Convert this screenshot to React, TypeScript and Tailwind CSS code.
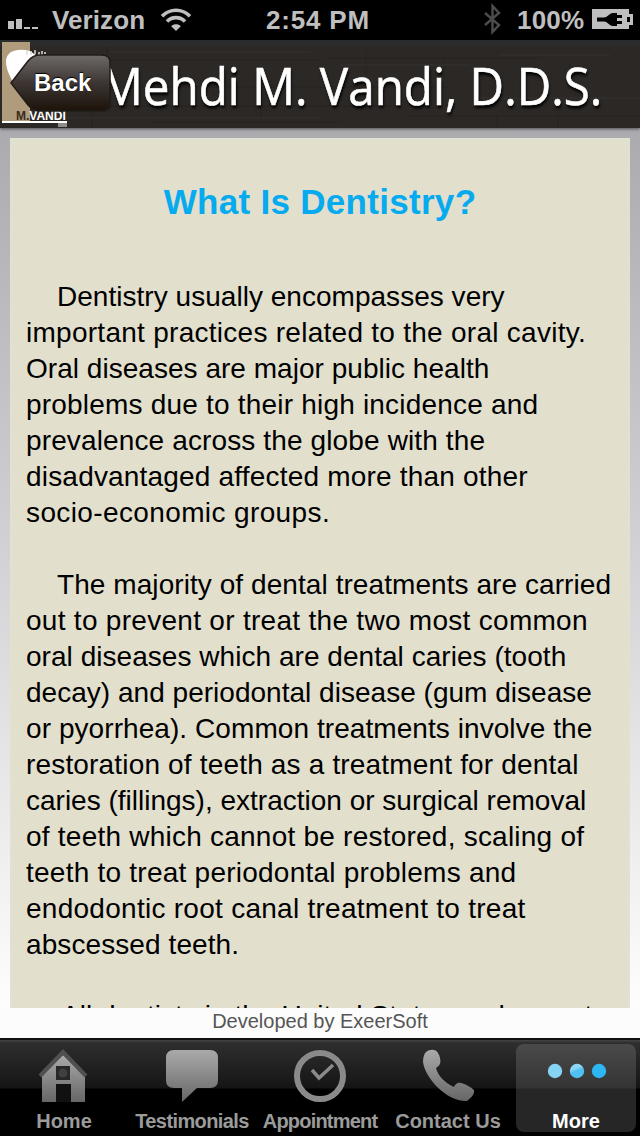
import type { ReactNode } from "react";
import clsx from "clsx";

interface TextLine {
  text: string;
  className?: string;
}

const paragraphs: TextLine[][] = [
  [
    { text: "Dentistry usually encompasses very", className: "pl-[31px] tracking-[0.03px]" },
    { text: "important practices related to the oral cavity.", className: "tracking-[0.27px]" },
    { text: "Oral diseases are major public health", className: "tracking-[0.03px]" },
    { text: "problems due to their high incidence and", className: "tracking-[0.2px]" },
    { text: "prevalence across the globe with the", className: "tracking-[0.13px]" },
    { text: "disadvantaged affected more than other", className: "tracking-[0.19px]" },
    { text: "socio-economic groups.", className: "tracking-[0.38px]" },
  ],
  [
    { text: "The majority of dental treatments are carried", className: "pl-[31px] tracking-[0.07px]" },
    { text: "out to prevent or treat the two most common", className: "tracking-[0.29px]" },
    { text: "oral diseases which are dental caries (tooth", className: "tracking-[0.04px]" },
    { text: "decay) and periodontal disease (gum disease", className: "tracking-[0.02px]" },
    { text: "or pyorrhea). Common treatments involve the", className: "tracking-[0.07px]" },
    { text: "restoration of teeth as a treatment for dental", className: "tracking-[0.17px]" },
    { text: "caries (fillings), extraction or surgical removal" },
    { text: "of teeth which cannot be restored, scaling of", className: "tracking-[0.23px]" },
    { text: "teeth to treat periodontal problems and", className: "tracking-[0.24px]" },
    { text: "endodontic root canal treatment to treat", className: "tracking-[0.27px]" },
    { text: "abscessed teeth.", className: "tracking-[0.09px]" },
  ],
  [{ text: "All dentists in the United States undergo at", className: "-mt-px pl-[35px] tracking-[0.05px]" }],
];

function StatusBar() {
  return (
    <div className="flex h-10 shrink-0 items-center bg-black text-[26px] font-bold text-[#bfbfbf]">
      <svg width="40" height="40" viewBox="0 0 40 40" fill="#bfbfbf">
        <path d="M8 21h6v8H8zM16 19h6v10h-6zM24 27h6v2h-6zM32 27h6v2h-6z" />
      </svg>
      <span className="ml-3 w-[94px] whitespace-nowrap tracking-[0.1px]">Verizon</span>
      <svg className="ml-[14px]" width="32" height="40" viewBox="0 0 32 40" fill="none" stroke="#bfbfbf" strokeWidth="3.6">
        <path d="M2 16.2c8-8 20-8 28 0M7 21.4c5-5 13-5 18 0" />
        <path d="M16 31l-4.8-4.8c2.8-2.6 6.8-2.6 9.6 0z" fill="#bfbfbf" stroke="none" />
      </svg>
      <span className="ml-[74px] w-[106px] whitespace-nowrap tracking-[0.8px]">2:54 PM</span>
      <svg className="ml-[111px]" width="20" height="40" viewBox="0 0 20 40" fill="none" stroke="#4d4d4d" strokeWidth="2.4">
        <path d="M2 13l14 12-6.500 7V6l6.500 7-14 12" />
      </svg>
      <span className="ml-[14px] w-[69px] whitespace-nowrap tracking-[0.2px]">100%</span>
      <svg className="ml-[5px]" width="44" height="40" viewBox="0 0 44 40">
        <path d="M1 9h37v5h4v11h-4v4H1z" fill="#bfbfbf" />
        <path d="M6 17.500h7c4 0 5-4.500 9-4.500h4v2h5v3h-5v3h5v3h-5v2h-4c-4 0-5-4.500-9-4.500H6z" fill="#000" />
        <path d="M36 17h3v5h-3z" fill="#000" />
      </svg>
    </div>
  );
}

function Header() {
  return (
    <div className="relative z-10 h-[88px] shrink-0 overflow-hidden bg-[#2c2825] shadow-[0_1px_3px_#0008]">
      <svg className="absolute inset-0" width="640" height="88" viewBox="0 0 640 88" fill="none">
        <path d="M0 3h640" stroke="#2b2c2c" strokeWidth="6" />
        <path d="M70 20h250M330 18h210M120 47h330M0 66h400M410 76h230M150 82h190" stroke="#272320" />
        <path d="M107 7v13M261 66v17M366 12v36M497 75v13M558 75v13M570 22v24M444 18v12M92 66v22" stroke="#262220" />
        <path d="M110 12h200M340 25h130M480 58h160M20 78h300M500 15h110" stroke="#302c29" strokeWidth="2" />
      </svg>
      <h1 className="absolute left-[100px] top-[9px] origin-left scale-x-[0.915] whitespace-nowrap font-['Open_Sans'] text-[52px] leading-[72px] text-white [-webkit-text-stroke:0.6px_white] [text-shadow:1px_3px_3px_#000]">
        Mehdi M. Vandi, D.D.S.
      </h1>
      <div className="absolute left-[2px] top-[2px] h-[81px] w-7 bg-[#b09c7c]" />
      <svg className="absolute left-0 top-0" width="70" height="88" viewBox="0 0 70 88">
        <path d="M30 11c-12-3-23-1-24 10 0 10 5 16 8 24h26V18z" fill="#fff" />
        <path d="M27 15v-4M31 15v-4M35 14v-4M39 12v3M42 15v-4M45 14v-2" stroke="#ddd" strokeWidth="1.5" />
        <path d="M2 81h65v2H2z" fill="#fff" />
        <path d="M58 83h9v4h-9z" fill="#8e8c8a" />
      </svg>
      <div className="absolute left-[16px] top-[70px] whitespace-nowrap text-[12px] font-bold leading-3 text-white">
        <span className="text-[#3a2a1c]">M.</span>VANDI
      </div>
      <button className="absolute left-[10px] top-[14px] h-[60px] w-[101px]">
        <svg className="absolute left-0 top-0" width="101" height="60" viewBox="0 0 101 60">
          <defs>
            <linearGradient id="back" x1="0" y1="0" x2="0" y2="1">
              <stop offset="0" stopColor="#6e6a68" />
              <stop offset="0.5" stopColor="#3c3532" />
              <stop offset="1" stopColor="#1c1209" />
            </linearGradient>
          </defs>
          <path
            d="M1 29L18 7q5-6 12-6h62q8 0 8 8v40q0 8-8 8H30q-7 0-12-6z"
            fill="url(#back)"
            stroke="#211c19"
            strokeWidth="1.5"
          />
        </svg>
        <span className="absolute left-6 top-[15px] text-[24px] font-bold leading-7 text-white [text-shadow:0_-1px_1px_#000]">
          Back
        </span>
      </button>
    </div>
  );
}

function Article() {
  return (
    <main className="mx-[10px] mt-[10px] h-[870px] shrink-0 overflow-hidden border-x-2 border-t-2 border-[#dfe2d3] bg-[#e2dfcd] text-black">
      <h2 className="mt-[41px] text-center text-[35px] font-bold leading-[42px] tracking-[0.3px] text-[#05aaef]">
        What Is Dentistry?
      </h2>
      <div className="ml-[14px] mt-14 flex flex-col gap-9 text-[28px] leading-9">
        {paragraphs.map((lines, i) => (
          <div key={i}>
            {lines.map((line) => (
              <p key={line.text} className={clsx("h-9 whitespace-nowrap", line.className)}>
                {line.text}
              </p>
            ))}
          </div>
        ))}
      </div>
    </main>
  );
}

interface TabProps {
  label: string;
  labelClassName?: string;
  active?: boolean;
  children: ReactNode;
}

function Tab({ label, labelClassName, active, children }: TabProps) {
  return (
    <button
      className={clsx(
        "my-1 flex w-[120px] flex-col items-center rounded-lg",
        active
          ? "bg-[linear-gradient(#4a4a4a_0px,#343434_44px,#262626_45px)] text-white"
          : "text-[#9b9b9b]"
      )}
    >
      <span className="flex h-[66px] items-center">{children}</span>
      <span className={clsx("mt-px whitespace-nowrap text-[20px] font-bold leading-5", labelClassName)}>{label}</span>
    </button>
  );
}

function TabBar() {
  return (
    <nav className="flex h-[98px] shrink-0 justify-between border-t-2 border-[#101010] bg-[linear-gradient(#444_0px,#2e2e2e_3px,#151515_48px,#000_49px)] px-1">
      <Tab label="Home">
        <svg className="-mt-1" width="52" height="54" viewBox="0 0 52 54">
          <defs>
            <linearGradient id="metal" x1="0" y1="0" x2="0" y2="1">
              <stop offset="0" stopColor="#aaa" />
              <stop offset="1" stopColor="#666" />
            </linearGradient>
          </defs>
          <path d="M4 27L25 7l22 20v27H33V36H18v18H4z" fill="url(#metal)" />
          <path d="M2 28L25 4l23 24" fill="none" stroke="#505050" strokeWidth="4" />
          <path d="M18 18h14v14H18z" fill="#272727" />
          <circle cx="25" cy="25" r="4.500" fill="#3f3f3f" />
          <path d="M18 36h15v18H18z" fill="#111" />
        </svg>
      </Tab>
      <Tab label="Testimonials" labelClassName="tracking-[-0.6px]">
        <svg className="-mt-1" width="54" height="54" viewBox="0 0 54 54">
          <path d="M9 2h36q8 0 8 8v22q0 8-8 8H32L17 54V40H9q-8 0-8-8V10q0-8 8-8z" fill="url(#metal)" />
        </svg>
      </Tab>
      <Tab label="Appointment" labelClassName="tracking-[-0.8px]">
        <svg className="-mt-1" width="54" height="54" viewBox="0 0 54 54" fill="none">
          <circle cx="27" cy="28" r="23" stroke="#8a8a8a" strokeWidth="6" />
          <path d="M19 22l7 8 14-13" stroke="#8a8a8a" strokeWidth="3.5" />
        </svg>
      </Tab>
      <Tab label="Contact Us">
        <svg className="-mt-1" width="54" height="54" viewBox="0 0 54 54">
          <path
            d="M5 4c4-3 10-3 12 1 2 3 3 8 2 11-1 2-3 3-4 4 2 8 9 15 18 19 1-3 4-5 7-4 4 1 10 4 13 7 1 4-3 8-7 11C26 54 4 30 2 14c0-4 1-8 3-10z"
            fill="url(#metal)"
          />
        </svg>
      </Tab>
      <Tab label="More" active>
        <svg className="-mt-1.5 ml-0.5" width="64" height="24" viewBox="0 0 64 24">
          <defs>
            <linearGradient id="dot" x1="0" y1="0" x2="0.4" y2="1">
              <stop offset="0.4" stopColor="#8bd6f5" />
              <stop offset="0.6" stopColor="#4fc0ef" />
            </linearGradient>
          </defs>
          <circle cx="10" cy="9" r="7.200" fill="#86d4f3" />
          <circle cx="32" cy="9" r="7.200" fill="url(#dot)" />
          <circle cx="54" cy="9" r="7.200" fill="#2db6f1" />
        </svg>
      </Tab>
    </nav>
  );
}

export default function App() {
  return (
    <div className="flex h-[1136px] w-[640px] flex-col overflow-hidden bg-linear-to-b from-[#aaa9ad] from-10% to-white to-90% font-['Liberation_Sans',sans-serif]">
      <StatusBar />
      <Header />
      <Article />
      <footer className="h-[30px] shrink-0 bg-[#fcfcfc] text-center text-[20px] leading-[26px] text-[#555]">
        Developed by ExeerSoft
      </footer>
      <TabBar />
    </div>
  );
}
